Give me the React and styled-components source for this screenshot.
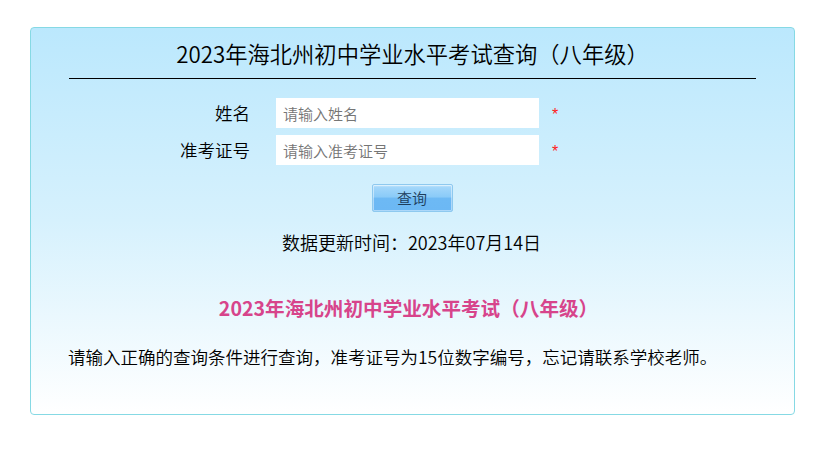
import React from "react";
import styled, { createGlobalStyle } from "styled-components";

const Global = createGlobalStyle`
  html, body { margin: 0; padding: 0; background: #fff; }
  body { font-family: "Microsoft YaHei", "Noto Sans CJK SC", "Noto Sans", sans-serif; color: #000; }
  * { box-sizing: border-box; }
`;

const Panel = styled.div`
  width: 765px;
  margin: 27px 0 0 30px;
  border: 1px solid #86d9e4;
  border-radius: 4px;
  background: linear-gradient(to bottom, #bbe8fd 0%, #d6f1fd 50%, #ffffff 100%);
  padding: 10px 0 45px;
`;

const Title = styled.h1`
  margin: 0;
  font-size: 22.3px;
  font-weight: 350;
  line-height: 30px;
  text-align: center;
`;

const Rule = styled.div`
  width: 90%;
  height: 1px;
  background: #000;
  margin: 10px auto 0;
`;

const Form = styled.div`
  margin-top: 19px;
  padding-left: 119px;
  display: grid;
  grid-template-columns: 126px 263px auto;
  row-gap: 7px;
  align-items: center;
`;

const Label = styled.label`
  font-size: 17.5px;
  font-weight: 350;
  line-height: 30px;
  text-align: right;
  padding-right: 26px;
`;

const Input = styled.input`
  width: 263px;
  height: 30px;
  border: none;
  outline: none;
  background: #fff;
  padding: 0 7px;
  font-family: inherit;
  font-size: 15px;
  font-weight: 350;
  color: #333;
  &::placeholder { color: #757575; }
`;

const Star = styled.span`
  color: #ff1a1a;
  font-size: 16px;
  font-family: "Liberation Sans", sans-serif;
  margin-left: 13px;
  line-height: 30px;
  position: relative;
  top: 2px;
`;

const ButtonRow = styled.div`
  display: flex;
  justify-content: center;
  margin-top: 19px;
  padding-right: 1px;
`;

const Button = styled.button`
  width: 81px;
  height: 28px;
  border: 1px solid #8ec9ef;
  border-radius: 2px;
  background: linear-gradient(to bottom, #c4e6fc 0%, #a2d6fa 10%, #8bcbf8 45%, #6db9f4 52%, #6cb8f4 100%);
  box-shadow: inset 0 0 0 1px rgba(255,255,255,0.45);
  font-family: inherit;
  font-size: 15px;
  font-weight: 350;
  color: #1d3d5c;
  padding: 0;
  line-height: 26px;
  cursor: pointer;
`;

const UpdateText = styled.div`
  margin-top: 18px;
  text-align: center;
  font-size: 18px;
  font-weight: 350;
  line-height: 24px;
  padding-right: 2px;
`;

const SubTitle = styled.h2`
  margin: 40px 0 0;
  text-align: center;
  font-size: 19.6px;
  font-weight: bold;
  line-height: 28px;
  color: #d7448b;
  padding-right: 8px;
`;

const Note = styled.p`
  margin: 23px 0 0;
  padding-left: 37px;
  font-size: 17.5px;
  font-weight: 350;
  line-height: 24px;
`;

export default function App() {
  return (
    <>
      <Global />
      <Panel>
        <Title>2023年海北州初中学业水平考试查询（八年级）</Title>
        <Rule />
        <Form>
          <Label>姓名</Label>
          <Input placeholder="请输入姓名" />
          <Star>*</Star>
          <Label>准考证号</Label>
          <Input placeholder="请输入准考证号" />
          <Star>*</Star>
        </Form>
        <ButtonRow>
          <Button>查询</Button>
        </ButtonRow>
        <UpdateText>数据更新时间：2023年07月14日</UpdateText>
        <SubTitle>2023年海北州初中学业水平考试（八年级）</SubTitle>
        <Note>请输入正确的查询条件进行查询，准考证号为15位数字编号，忘记请联系学校老师。</Note>
      </Panel>
    </>
  );
}
